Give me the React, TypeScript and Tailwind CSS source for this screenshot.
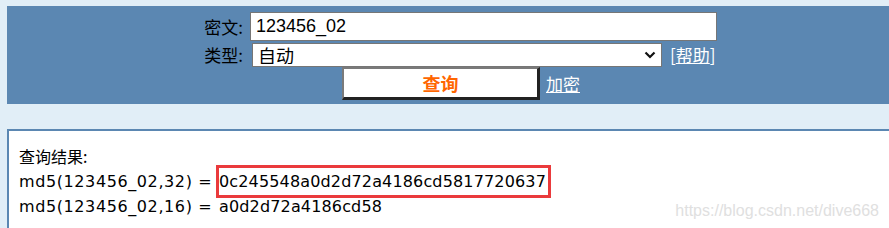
import { useState } from 'react';

const cjk = '"Noto Sans CJK SC", sans-serif';
const mono = '"DejaVu Sans", Verdana, sans-serif';

export default function App() {
  const [cipher, setCipher] = useState('123456_02');
  const [type, setType] = useState('auto');
  return (
    <div className="min-h-[228px] w-full bg-[#e1eef7] pt-[6px] pl-[7px] overflow-hidden" style={{ fontFamily: cjk }}>
      <div className="bg-[#5b87b2] h-[98px] pt-[5px]">
        <div className="ml-[196px] w-[514px] flex flex-col">
          <div className="flex items-center h-[30px]">
            <label className="w-[40px] text-[17px] leading-none text-black text-right">密文:</label>
            <input
              value={cipher}
              onChange={e => setCipher(e.target.value)}
              className="ml-[7px] w-[467px] h-[29px] bg-white border border-[#767676] px-[5px] text-[18px] text-black outline-none"
              style={{ fontFamily: '"Liberation Sans", Arial, sans-serif' }}
            />
          </div>
          <div className="flex items-center h-[25px] mt-[1px]">
            <label className="w-[40px] text-[17px] leading-none text-black text-right">类型:</label>
            <div className="relative ml-[9px] w-[410px] h-[24px]">
              <select
                value={type}
                onChange={e => setType(e.target.value)}
                className="appearance-none w-full h-full bg-white border border-[#767676] pl-[5px] text-[18px] leading-none text-black outline-none"
                style={{ fontFamily: cjk }}
              >
                <option value="auto">自动</option>
                <option value="md5">md5</option>
              </select>
              <svg className="absolute right-[6px] top-[8px] pointer-events-none" width="12" height="8" viewBox="0 0 12 8">
                <path d="M1.5 1.5 L6 6 L10.5 1.5" fill="none" stroke="#111" strokeWidth="2.2" />
              </svg>
            </div>
            <a href="#" className="ml-[8px] text-[17px] leading-none text-white">
              [<span className="underline">帮助</span>]
            </a>
          </div>
          <div className="flex items-center h-[33px] ml-[139px]">
            <button
              type="button"
              className="w-[198px] h-[33px] bg-white border-t-2 border-l-2 border-t-[#7a7a7a] border-l-[#7a7a7a] border-b-[3px] border-r-[3px] border-b-[#222] border-r-[#222] text-[18px] font-bold text-[#ff6600]"
              style={{ fontFamily: cjk }}
            >
              查询
            </button>
            <a href="#" className="ml-[6px] text-[17px] leading-none text-white underline">加密</a>
          </div>
        </div>
      </div>
      <div className="relative mt-[25px] bg-white border-t-2 border-l-2 border-[#5b87b2] h-[110px] pl-[10px] pt-[13px] text-[16px] leading-[25px] text-black">
        <div style={{ fontFamily: cjk }}>查询结果:</div>
        <div className="flex" style={{ fontFamily: mono }}>
          <span className="inline-block w-[200px] tracking-[0.6px]">md5(123456_02,32) =</span>
          <span className="relative tracking-[0.15px]">
            0c245548a0d2d72a4186cd5817720637
            <span className="absolute -left-[3px] -right-[5px] -top-[4px] -bottom-[4px] border-[3px] border-[#ea3a3c]" />
          </span>
        </div>
        <div style={{ fontFamily: mono }}>
          <span className="inline-block w-[200px] tracking-[0.6px]">md5(123456_02,16) =</span>
          <span className="tracking-[0.15px]">a0d2d72a4186cd58</span>
        </div>
        <div
          className="absolute right-[10px] top-[67px] text-[16px] text-[#e0e0e0]"
          style={{ fontFamily: '"Liberation Sans", Arial, sans-serif' }}
        >
          https://blog.csdn.net/dive668
        </div>
      </div>
    </div>
  );
}
